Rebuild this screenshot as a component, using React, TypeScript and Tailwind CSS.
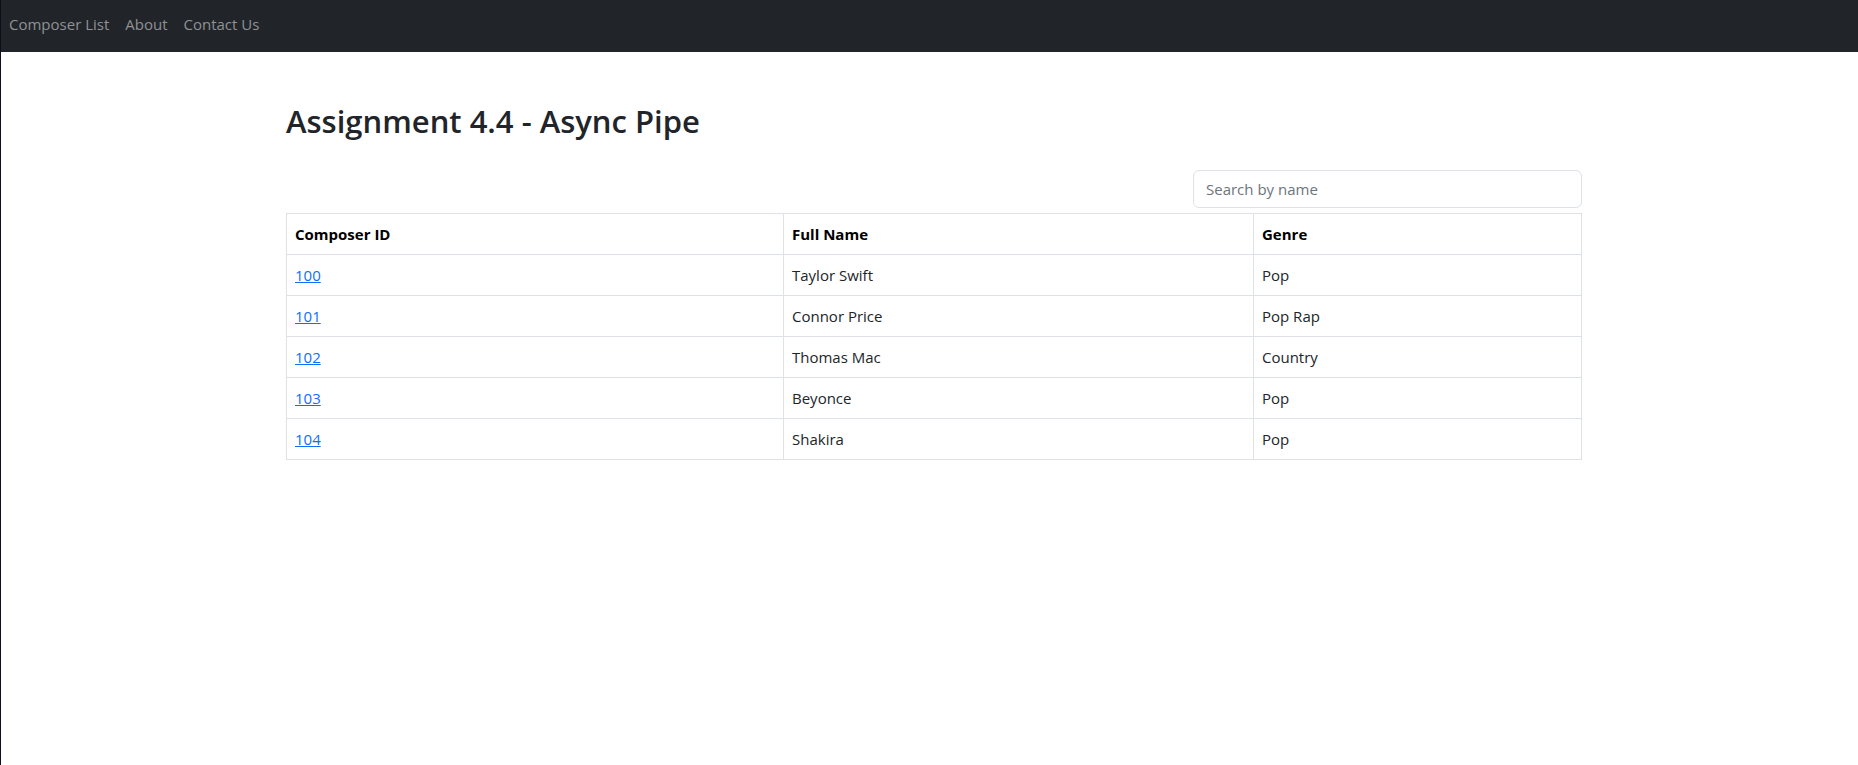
const composers = [
  { id: 100, name: 'Taylor Swift', genre: 'Pop' },
  { id: 101, name: 'Connor Price', genre: 'Pop Rap' },
  { id: 102, name: 'Thomas Mac', genre: 'Country' },
  { id: 103, name: 'Beyonce', genre: 'Pop' },
  { id: 104, name: 'Shakira', genre: 'Pop' },
];

const NAV_LINKS = ['Composer List', 'About', 'Contact Us'];

function NavBar() {
  return (
    <nav className="h-[52px] pb-[3px] bg-[#212529] flex items-center">
      {NAV_LINKS.map((link) => (
        <a key={link} href="#" className="px-2 text-[15px] text-[#8f9194]">
          {link}
        </a>
      ))}
    </nav>
  );
}

function ComposerTable() {
  return (
    <table className="w-[1296px] table-fixed border-collapse text-[15px] text-[#212529] mt-[5px]">
      <thead>
        <tr>
          <th className="w-[497px] border border-[#dee2e6] px-2 py-2 leading-6 text-left font-bold text-black">
            Composer ID
          </th>
          <th className="w-[470px] border border-[#dee2e6] px-2 py-2 leading-6 text-left font-bold text-black">
            Full Name
          </th>
          <th className="border border-[#dee2e6] px-2 py-2 leading-6 text-left font-bold text-black">
            Genre
          </th>
        </tr>
      </thead>
      <tbody>
        {composers.map((c) => (
          <tr key={c.id}>
            <td className="border border-[#dee2e6] px-2 py-2 leading-6">
              <a href="#" className="text-[#0d6efd] underline">
                {c.id}
              </a>
            </td>
            <td className="border border-[#dee2e6] px-2 py-2 leading-6">{c.name}</td>
            <td className="border border-[#dee2e6] px-2 py-2 leading-6">{c.genre}</td>
          </tr>
        ))}
      </tbody>
    </table>
  );
}

export default function App() {
  return (
    <div className="h-[765px] bg-white border-l border-[#0c0f1c] font-['Open_Sans',sans-serif]">
      <NavBar />
      <main className="pl-[285px]">
        <h1 className="mt-[49px] mb-[29px] text-[31px] leading-[40px] font-semibold text-[#212529]">
          Assignment 4.4 - Async Pipe
        </h1>
        <div className="w-[1296px] flex justify-end">
          <input
            type="text"
            placeholder="Search by name"
            className="w-[389px] h-[38px] px-3 border border-[#dee2e6] rounded-md text-[15px] text-[#212529] placeholder:text-[#6c757d] outline-none"
          />
        </div>
        <ComposerTable />
      </main>
    </div>
  );
}
